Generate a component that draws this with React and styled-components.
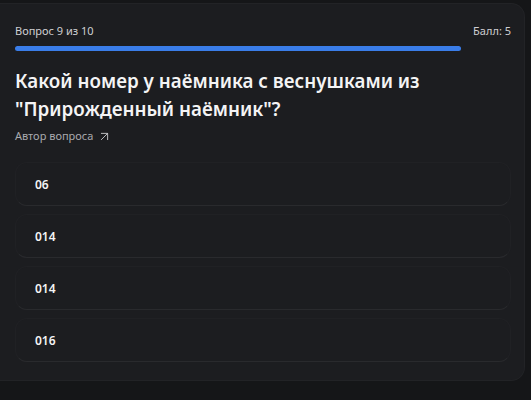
import styled, { createGlobalStyle } from "styled-components";
import { ArrowUpRight } from "lucide-react";

const GlobalStyle = createGlobalStyle`
  html, body {
    margin: 0;
    padding: 0;
    background: #151618;
  }
  body {
    font-family: "Noto Sans", "Liberation Sans", sans-serif;
    color: #f2f2f3;
  }
`;

const answers = ["06", "014", "014", "016"];
const current = 9;
const total = 10;
const score = 5;

const App = () => {
  return (
    <>
      <GlobalStyle />
      <Page>
        <Card>
          <Header>
            <span>
              Вопрос {current} из {total}
            </span>
            <span>Балл: {score}</span>
          </Header>
          <Progress>
            <ProgressFill style={{ width: `${(current / total) * 100}%` }} />
          </Progress>
          <Question>
            Какой номер у наёмника с веснушками из "Прирожденный наёмник"?
          </Question>
          <AuthorLink href="#">
            Автор вопроса
            <ArrowUpRight size={15} strokeWidth={1.5} />
          </AuthorLink>
          <AnswerList>
            {answers.map((answer, i) => (
              <Answer key={i}>{answer}</Answer>
            ))}
          </AnswerList>
        </Card>
      </Page>
    </>
  );
};

const Page = styled.div`
  padding: 3px 6px 20px 0;
`;

const Card = styled.div`
  background: #1c1d20;
  border: 1px solid #222326;
  border-left: none;
  border-radius: 0 14px 14px 0;
  padding: 19px 13px 18px 15px;
`;

const Header = styled.div`
  display: flex;
  justify-content: space-between;
  align-items: center;
  font-size: 11px;
  line-height: 16px;
  color: #cfcfd2;
`;

const Progress = styled.div`
  margin-top: 7px;
  height: 5px;
  border-radius: 3px;
  background: transparent;
`;

const ProgressFill = styled.div`
  height: 100%;
  border-radius: 3px;
  background: #3a7de8;
`;

const Question = styled.h1`
  margin: 16px 0 0;
  font-size: 18.8px;
  font-weight: 600;
  line-height: 28px;
  color: #f4f4f5;
`;

const AuthorLink = styled.a`
  display: inline-flex;
  align-items: center;
  gap: 4px;
  margin-top: 2px;
  font-size: 11px;
  line-height: 16px;
  color: #a9aaae;
  text-decoration: none;

  svg {
    color: #c4c5c8;
  }
`;

const AnswerList = styled.div`
  display: flex;
  flex-direction: column;
  gap: 8px;
  margin-top: 17px;
`;

const Answer = styled.div`
  height: 44px;
  box-sizing: border-box;
  display: flex;
  align-items: center;
  padding: 0 19px;
  border: 1px solid #202124;
  border-bottom-color: #292a2d;
  border-radius: 12px;
  font-size: 12px;
  font-weight: 600;
  color: #f4f4f5;
`;

export default App;
